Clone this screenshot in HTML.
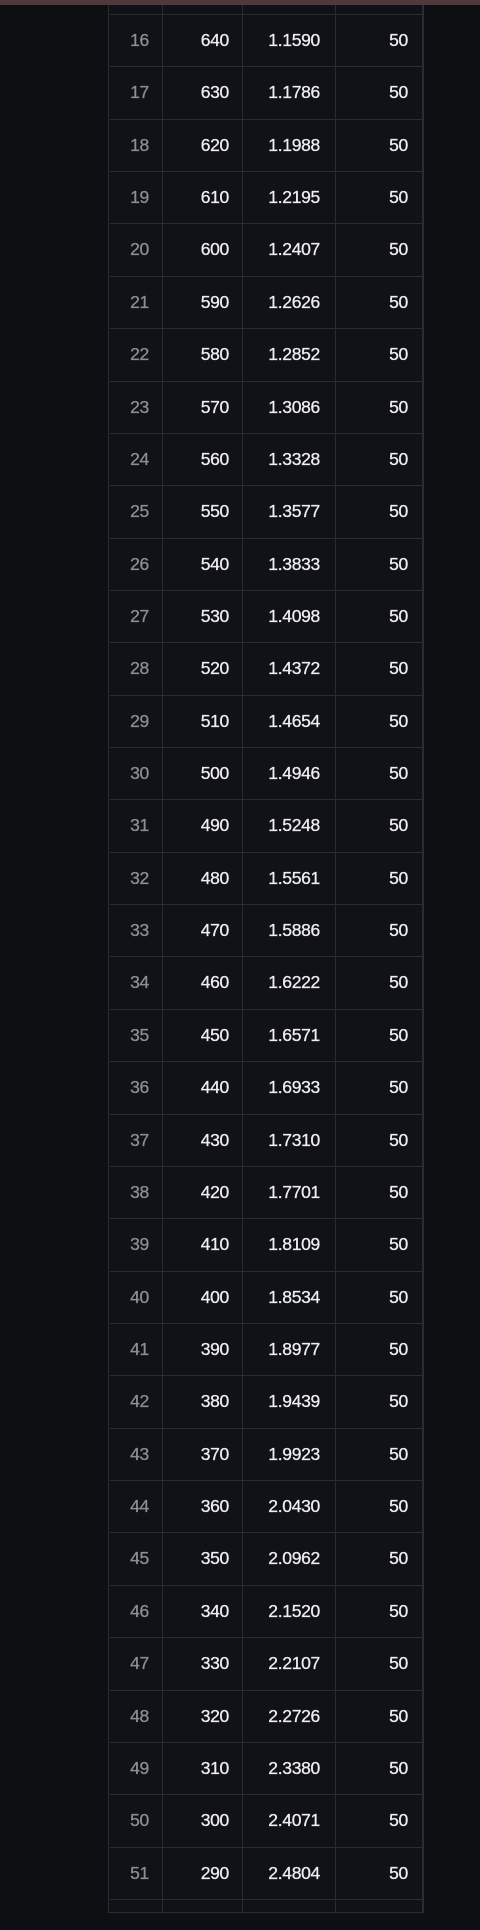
<!DOCTYPE html>
<html><head><meta charset="utf-8"><style>
html,body{margin:0;padding:0;background:#0e0f13;width:480px;height:1930px;overflow:hidden;font-family:"Liberation Sans",sans-serif;}
.top{position:absolute;left:0;top:0;width:480px;height:5px;background:#4e3a3a;}
.tbl{position:absolute;left:108px;top:5px;width:316px;height:1908px;background:#111217;border-left:1px solid #2a2c31;border-right:2px solid #2a2c31;border-bottom:1px solid #2a2c31;box-sizing:border-box;}
.v{position:absolute;top:5px;width:1px;height:1907px;background:#2a2c31;}
.h{position:absolute;left:110px;width:312px;height:1px;background:#2a2c31;}
.row{position:absolute;left:108px;width:316px;height:52px;font-size:17.5px;color:#eeeef0;-webkit-text-stroke:0.3px #eeeef0;letter-spacing:-0.3px;}
.row span{position:absolute;top:-1px;line-height:52px;text-align:right;}
.a{right:275px;color:#8d8e92;-webkit-text-stroke:0.3px #8d8e92;}
.b{right:195px;}
.c{right:104px;}
.d{right:16px;}
</style></head><body>
<div class="top"></div>
<div class="tbl"></div>
<div class="v" style="left:162px"></div>
<div class="v" style="left:242px"></div>
<div class="v" style="left:335px"></div>
<div id="g"></div>
<script>
var d=[[16,640,"1.1590"],[17,630,"1.1786"],[18,620,"1.1988"],[19,610,"1.2195"],[20,600,"1.2407"],[21,590,"1.2626"],[22,580,"1.2852"],[23,570,"1.3086"],[24,560,"1.3328"],[25,550,"1.3577"],[26,540,"1.3833"],[27,530,"1.4098"],[28,520,"1.4372"],[29,510,"1.4654"],[30,500,"1.4946"],[31,490,"1.5248"],[32,480,"1.5561"],[33,470,"1.5886"],[34,460,"1.6222"],[35,450,"1.6571"],[36,440,"1.6933"],[37,430,"1.7310"],[38,420,"1.7701"],[39,410,"1.8109"],[40,400,"1.8534"],[41,390,"1.8977"],[42,380,"1.9439"],[43,370,"1.9923"],[44,360,"2.0430"],[45,350,"2.0962"],[46,340,"2.1520"],[47,330,"2.2107"],[48,320,"2.2726"],[49,310,"2.3380"],[50,300,"2.4071"],[51,290,"2.4804"]];
var h="",rh=52.36,t0=14;
for(var i=0;i<=36;i++){h+='<div class="h" style="top:'+Math.round(t0+i*rh)+'px"></div>';}
for(var i=0;i<36;i++){var y=Math.round(t0+i*rh)+1;h+='<div class="row" style="top:'+y+'px"><span class="a">'+d[i][0]+'</span><span class="b">'+d[i][1]+'</span><span class="c">'+d[i][2]+'</span><span class="d">50</span></div>';}
document.getElementById("g").innerHTML=h;
</script>
</body></html>
